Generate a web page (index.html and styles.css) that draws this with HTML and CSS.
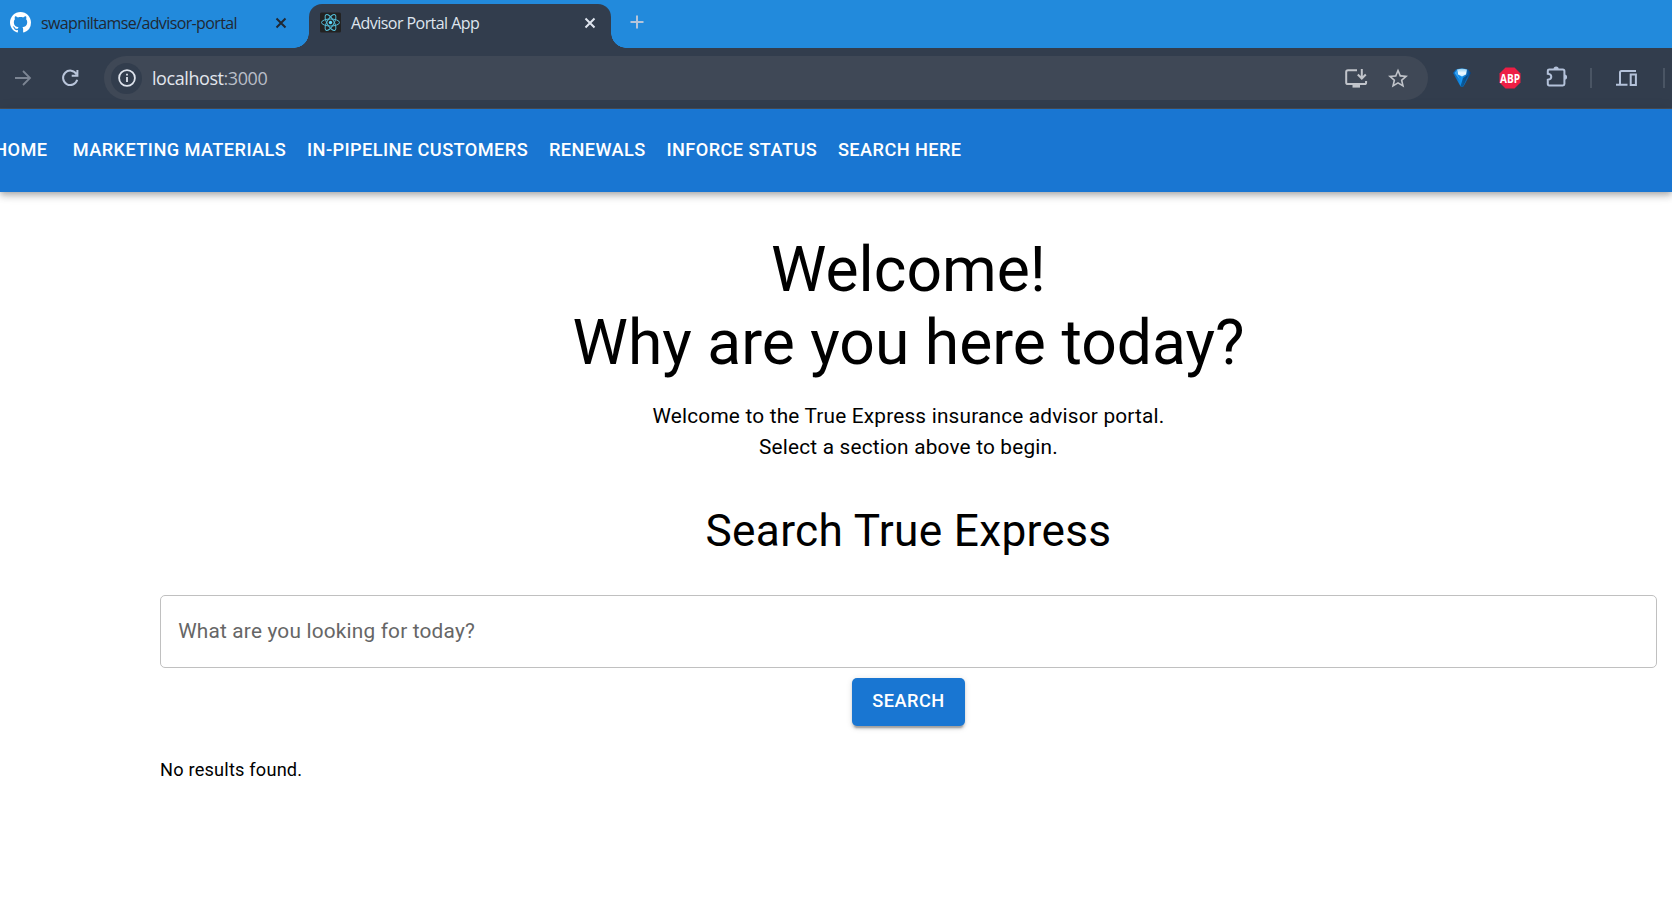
FILE: index.html
```html
<!DOCTYPE html>
<html lang="en">
<head>
<meta charset="utf-8">
<title>Advisor Portal App</title>
<link rel="stylesheet" href="styles.css">
</head>
<body>
<div class="tabstrip">
  <div class="tab">
    <svg class="favicon" viewBox="0 0 16 16"><path fill="#fff" d="M8 0C3.58 0 0 3.58 0 8c0 3.54 2.29 6.53 5.47 7.59.4.07.55-.17.55-.38 0-.19-.01-.82-.01-1.49-2.01.37-2.53-.49-2.69-.94-.09-.23-.48-.94-.82-1.13-.28-.15-.68-.52-.01-.53.63-.01 1.08.58 1.23.82.72 1.21 1.87.87 2.33.66.07-.52.28-.87.51-1.07-1.78-.2-3.64-.89-3.64-3.95 0-.87.31-1.59.82-2.15-.08-.2-.36-1.02.08-2.12 0 0 .67-.21 2.2.82.64-.18 1.32-.27 2-.27s1.36.09 2 .27c1.53-1.04 2.2-.82 2.2-.82.44 1.1.16 1.92.08 2.12.51.56.82 1.27.82 2.15 0 3.07-1.87 3.75-3.65 3.95.29.25.54.73.54 1.48 0 1.07-.01 1.93-.01 2.2 0 .21.15.46.55.38A8.01 8.01 0 0 0 16 8c0-4.42-3.58-8-8-8z"/></svg>
    <span class="tab-title">swapniltamse/advisor-portal</span>
    <svg class="close" viewBox="0 0 12 12"><path d="M1.5 1.5l9 9M10.5 1.5l-9 9"/></svg>
  </div>
  <div class="tab tab-active">
    <svg class="favicon" viewBox="0 0 21 20"><rect width="21" height="20" rx="1.5" fill="#222"/><g fill="none" stroke="#53bcd6" stroke-width="1"><ellipse cx="10.500" cy="10" rx="9" ry="3.500"/><ellipse cx="10.500" cy="10" rx="9" ry="3.500" transform="rotate(60 10.500 10)"/><ellipse cx="10.500" cy="10" rx="9" ry="3.500" transform="rotate(120 10.500 10)"/></g><circle cx="10.500" cy="10" r="1.700" fill="#61dafb"/></svg>
    <span class="tab-title">Advisor Portal App</span>
    <svg class="close" viewBox="0 0 12 12"><path d="M1.500 1.500l9 9M10.500 1.500l-9 9"/></svg>
  </div>
  <svg class="new-tab" viewBox="0 0 14 14"><path d="M7 .5v13M.5 7h13"/></svg>
</div>
<div class="toolbar">
  <svg class="forward" viewBox="0 0 16 16"><path d="M0 8h14.500M8 1l7 7-7 7"/></svg>
  <svg class="reload" viewBox="0 0 18 18"><path d="M15.500 5.200A7.200 7.200 0 1 0 16.200 10.800M16.400 1v5.700h-5.700"/></svg>
  <div class="omnibox">
    <span class="info"><svg viewBox="0 0 18 18"><circle cx="9" cy="9" r="7.900"/><path d="M9 8v5M9 4.700v1.900"/></svg></span>
    <span class="url">localhost<span class="port">:3000</span></span>
    <svg class="install" viewBox="0 0 22 19"><path d="M12 1.200H3Q1.200 1.200 1.200 3v10.500q0 1.600 1.800 1.600h16.500q1.600 0 1.600-1.600V12M16.800 0v9M12.800 5.500l4 4 4-4"/><path class="solid" d="M7.500 15h7.500v3.600H7.500z"/></svg>
    <svg class="star" viewBox="2 2 20 19"><path d="M22 9.240l-7.190-.62L12 2 9.190 8.630 2 9.240l5.460 4.730L5.820 21 12 17.270 18.180 21l-1.630-7.030L22 9.240zM12 15.400l-3.760 2.270 1-4.280-3.320-2.880 4.380-.38L12 6.100l1.710 4.040 4.380.38-3.320 2.880 1 4.280L12 15.400z"/></svg>
  </div>
  <svg class="gem" viewBox="0 0 18 20"><defs><linearGradient id="gem" x1="0" x2="1"><stop offset="0" stop-color="#0560b0"/><stop offset=".5" stop-color="#1597f5"/><stop offset="1" stop-color="#063d7c"/></linearGradient><linearGradient id="shine" x1="0" x2="0" y1="0" y2="1"><stop offset="0" stop-color="#8fd0f7"/><stop offset=".55" stop-color="#f2fbff"/><stop offset="1" stop-color="#c4e8ff"/></linearGradient></defs><path fill="url(#gem)" d="M3 1.500Q9-.5 15 1.500L18 5l-7 12.500q-2 3-4 0L0 5z"/><path fill="url(#shine)" d="M4 1.500Q9 0 14 1.500L13 6.500 9 8.500 5 6.500z"/><path fill="#35a2f2" d="M1.500 5l2.500-3L5 7l2 5z"/><path fill="#043564" d="M10 10l5-3-4.500 11q-1.500 2-3 0z" opacity=".6"/></svg>
  <svg class="abp" viewBox="0 0 22 22"><path fill="#ed1e45" d="M6.500.500h9l6 6v9l-6 6h-9l-6-6v-9z"/><text x="11" y="15.500" text-anchor="middle" textLength="20" lengthAdjust="spacingAndGlyphs">ABP</text></svg>
  <svg class="puzzle" viewBox="0 0 22 22"><path d="M3.200 4.500h13.600q1.600 0 1.600 1.600v13q0 1.300-1.600 1.300H3.200q-1.400 0-1.400-1.400v-4.200q3.500-.3 3.500-3t-3.500-3V5.800q0-1.300 1.400-1.300z"/><path class="solid" d="M7.500 4a2.600 2.600 0 0 1 5.200 0zM18.500 9.500a2.600 2.600 0 0 1 0 5.200z"/></svg>
  <span class="divider"></span>
  <svg class="devices" viewBox="0 0 22 18"><path d="M20 1.900H5.500Q4 1.900 4 3.400V15M0 15.700h11.500M14.700 5.600h5.200v10.300h-5.200z"/></svg>
  <span class="divider divider-end"></span>
</div>
<nav class="appbar">
  <a>Home</a><a>Marketing Materials</a><a>In-Pipeline Customers</a><a>Renewals</a><a>Inforce Status</a><a>Search Here</a>
</nav>
<main class="content">
  <h1>Welcome!<br>Why are you here today?</h1>
  <p class="intro">Welcome to the True Express insurance advisor portal.<br>Select a section above to begin.</p>
  <h2>Search True Express</h2>
  <input class="field" type="text" placeholder="What are you looking for today?">
  <button class="search">Search</button>
  <p class="results">No results found.</p>
</main>
</body>
</html>
```

FILE: styles.css
```css
* { box-sizing: border-box; }
html, body { margin: 0; height: 100%; overflow: hidden; }
body { background: #fff; color: #000; font-family: Roboto, sans-serif; }
svg { display: block; flex: none; overflow: visible; fill: none; }

/* Browser tabs */
.tabstrip { display: flex; height: 48px; padding-top: 4px; background: #228adc; font: 16px/24px "Open Sans", "Noto Sans", sans-serif; }
.tab { display: flex; align-items: center; width: 309px; height: 44px; padding: 0 22px 7px 10px; color: #202833; }
.tab-active { position: relative; width: 302px; padding: 0 15px 7px 11px; border-radius: 13px 13px 0 0; background: #323d4d; color: #dfe5ef; }
.tab-active::before, .tab-active::after { content: ""; position: absolute; bottom: 0; width: 15px; height: 15px; }
.tab-active::before { right: 100%; background: radial-gradient(circle at 0 0, transparent 14.5px, #323d4d 15px); }
.tab-active::after { left: 100%; background: radial-gradient(circle at 100% 0, transparent 14.5px, #323d4d 15px); }
.favicon { width: 21px; height: 21px; margin-right: 10px; }
.tab-title { flex: 1; padding-top: 1px; letter-spacing: -0.62px; white-space: nowrap; }
.tab-active .tab-title { letter-spacing: -0.55px; }
.close { width: 12px; height: 12px; stroke: currentColor; stroke-width: 2; }
.new-tab { width: 14px; height: 14px; margin: 11px 0 0 19px; stroke: #b6c5da; stroke-width: 2; }

/* Browser toolbar */
.toolbar { display: flex; align-items: center; height: 61px; border-bottom: 1px solid #4a4e55; background: #323d4d; }
.forward { width: 16px; height: 16px; margin-left: 15px; stroke: #7c8593; stroke-width: 1.8; }
.reload { width: 18px; height: 18px; margin-left: 30px; stroke: #b9c5da; stroke-width: 2; }
.omnibox { display: flex; align-items: center; width: 1324px; height: 44px; margin-left: 25px; padding: 0 20px 0 7px; border-radius: 22px; background: #3f4856; }
.info { display: grid; place-items: center; width: 31px; height: 31px; border-radius: 50%; background: #323d4d; }
.info svg { width: 18px; height: 18px; stroke: #dfe4ed; stroke-width: 1.8; }
.url { flex: 1; margin-left: 10px; color: #e2e6ed; font: 18px/26px "Open Sans", "Noto Sans", sans-serif; letter-spacing: -0.43px; }
.port { color: #b9bec8; }
.install { width: 22px; height: 19px; margin-right: 21px; color: #c1c4ca; stroke: #c1c4ca; stroke-width: 2; }
.install .solid, .puzzle .solid { fill: currentColor; stroke: none; }
.star { width: 20px; height: 20px; fill: #c1c4ca; }
.gem { width: 18px; height: 20px; margin-left: 25px; }
.abp { width: 22px; height: 22px; margin-left: 28px; }
.abp text { fill: #fff; font: bold 12px "Open Sans", sans-serif; }
.puzzle { width: 22px; height: 22px; margin: 0 0 4px 25px; color: #b4c2da; stroke: #b4c2da; stroke-width: 2; }
.divider { flex: none; width: 2px; height: 20px; margin-left: 22px; background: #4a5564; }
.devices { width: 22px; height: 18px; margin-left: 24px; stroke: #b4c2da; stroke-width: 2; }
.divider-end { margin-left: 25px; }

/* Application bar */
.appbar { display: flex; align-items: center; height: 83px; padding-bottom: 2px; background: #1976d2; color: #fff; box-shadow: 0 2.6px 5.2px -1.3px rgba(0,0,0,.2), 0 5.2px 6.5px rgba(0,0,0,.14), 0 1.3px 13px rgba(0,0,0,.12); }
.appbar a { flex: none; min-width: 83.2px; padding: 0 10.4px; font-size: 18.2px; font-weight: 500; line-height: 32px; letter-spacing: .415px; text-align: center; text-transform: uppercase; }
.appbar a:first-child { margin-left: -20.8px; }

/* Page content */
.content { display: flex; flex-direction: column; align-items: center; padding: 40.6px 15px 0 160px; }
h1, h2, p { margin: 0; font-weight: 400; text-align: center; }
h1 { font-size: 62.4px; line-height: 73px; }
.intro { margin-top: 22.4px; font-size: 20.8px; line-height: 31.2px; letter-spacing: .00938em; }
h2 { margin-top: 41px; font-size: 44.2px; line-height: 54.6px; letter-spacing: .00735em; }
.field { width: 100%; height: 73px; margin-top: 36px; padding: 0 17.2px; border: 1px solid #c0c0c0; border-radius: 5px; background: #fff; font: 20.8px Roboto, sans-serif; letter-spacing: .00938em; }
.field::placeholder { color: #666; opacity: 1; }
.search { width: 113px; height: 48px; margin-top: 10px; padding: 0 0 2px; border: 0; border-radius: 5px; background: #1976d2; color: #fff; font: 500 18.2px/32px Roboto, sans-serif; letter-spacing: .45px; text-transform: uppercase; box-shadow: 0 4px 1.3px -2.6px rgba(0,0,0,.2), 0 2.6px 2.6px rgba(0,0,0,.14), 0 1.3px 6.5px rgba(0,0,0,.12); }
.results { align-self: flex-start; margin-top: 31px; font-size: 18.2px; line-height: 26px; letter-spacing: .01071em; }
```
